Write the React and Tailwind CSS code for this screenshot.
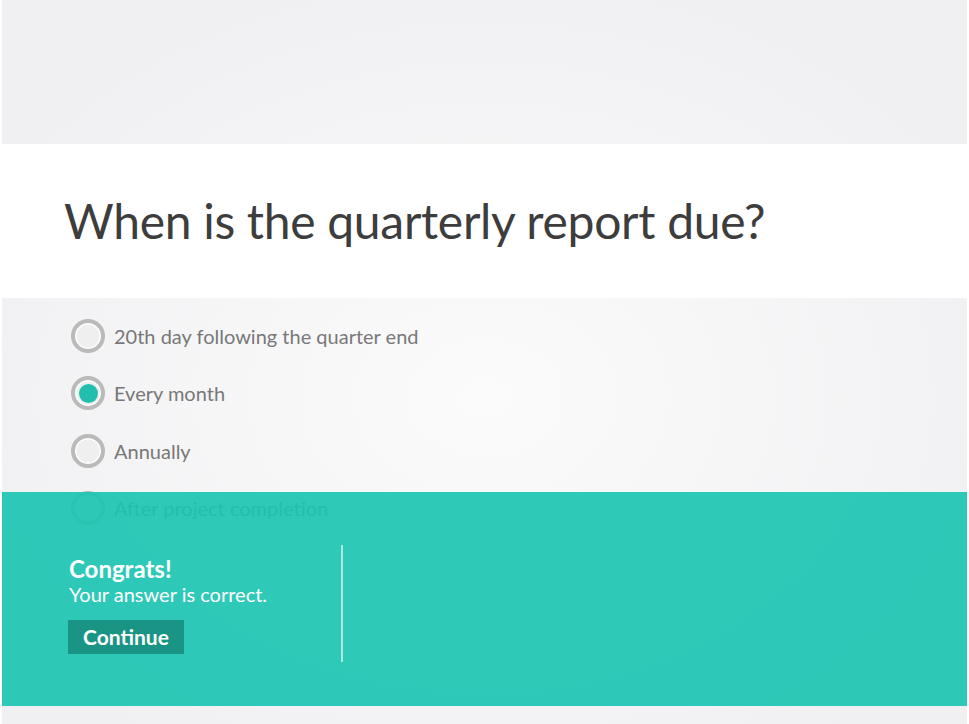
import React from 'react';

const options = [
  { label: '20th day following the quarter end', checked: false },
  { label: 'Every month', checked: true },
  { label: 'Annually', checked: false },
  { label: 'After project completion', checked: false },
];

function Radio({ checked }) {
  return (
    <div className="w-[34px] h-[34px] shrink-0 rounded-full border-[4px] border-[#bababa] bg-[#efefef] flex items-center justify-center shadow-[inset_0_0_0_1.5px_#ffffff]">
      {checked && <div className="w-[19px] h-[19px] rounded-full bg-[#22bfae]" />}
    </div>
  );
}

export default function App() {
  return (
    <div className="w-full h-[724px] bg-white flex" style={{ fontFamily: 'Lato, "Open Sans", sans-serif' }}>
      <div className="ml-[2px] w-[965px] h-full flex flex-col bg-[radial-gradient(ellipse_60%_60%_at_50%_55%,#fbfbfc_0%,#f0f0f2_100%)]">
        <div className="h-[144px] shrink-0" />

        <div className="h-[154px] shrink-0 bg-white flex items-center pl-[62px]">
          <h1 className="text-[48px] leading-none text-[#3d3d3d] tracking-[-0.3px]">
            When is the quarterly report due?
          </h1>
        </div>

        <div className="h-[194px] shrink-0 pt-[9px] pl-[69px] flex flex-col">
          {options.map((o) => (
            <div key={o.label} className="h-[57.5px] shrink-0 flex items-center gap-[9px]">
              <Radio checked={o.checked} />
              <span className="text-[20px] text-[#787878]">{o.label}</span>
            </div>
          ))}
        </div>

        <div className="h-[214px] shrink-0 relative z-10 bg-[#1cc4b1]/[0.92] flex pt-[53px]">
          <div className="w-[339px] pl-[66px] pt-[10px] text-white">
            <div className="text-[24px] font-bold leading-[28px] pl-[1px]">Congrats!</div>
            <div className="text-[20px] leading-[22px] pl-[1px]">Your answer is correct.</div>
            <button className="mt-[15px] w-[116px] h-[34px] bg-[#1a9585] text-white text-[21px] font-bold flex items-center justify-center">
              Continue
            </button>
          </div>
          <div className="w-[2px] h-[117px] bg-white/60" />
        </div>

        <div className="flex-1" />
      </div>
    </div>
  );
}
